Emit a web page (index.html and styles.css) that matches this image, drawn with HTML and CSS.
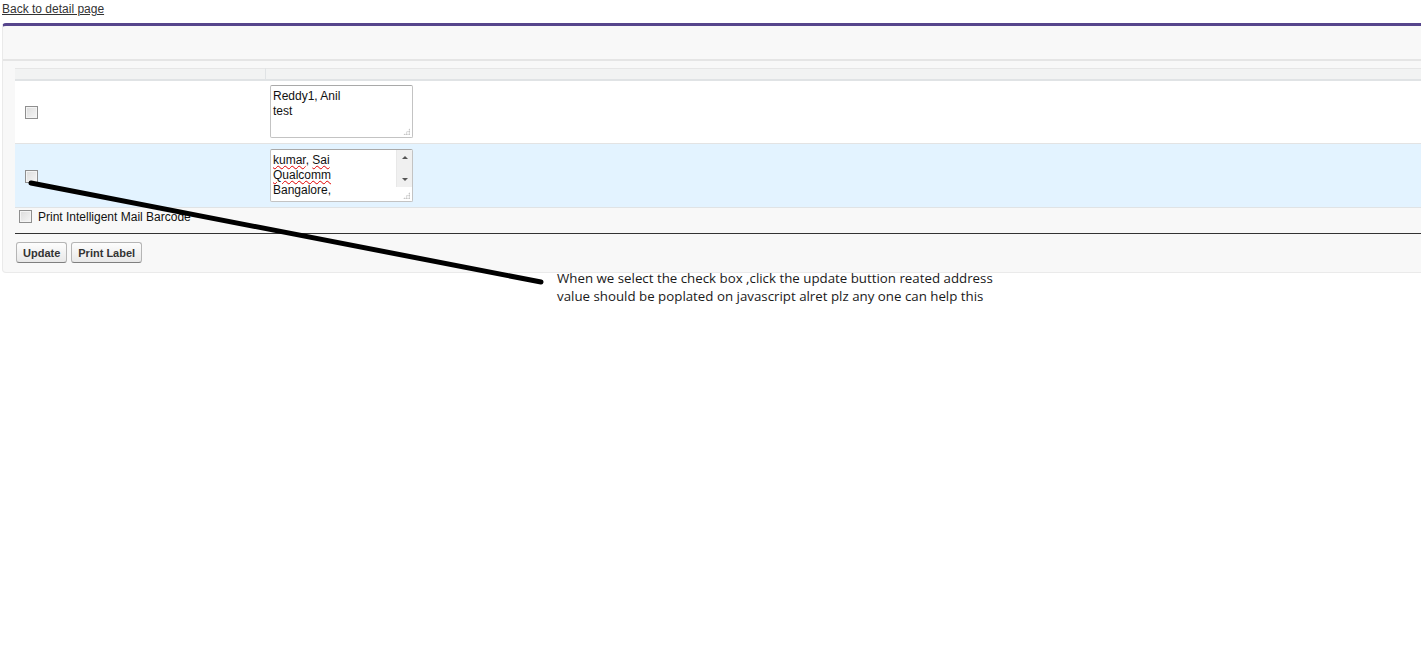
FILE: index.html
```html
<!DOCTYPE html>
<html lang="en">
<head>
    <meta charset="UTF-8">
    <title>Print Labels</title>
    <link rel="stylesheet" href="styles.css">
</head>
<body>
    <a class="back-link" href="#">Back to detail page</a>
    <div class="page-block">
        <div class="block-header"></div>
        <table class="list">
            <tr class="head-row">
                <th class="col-check"></th>
                <th></th>
            </tr>
            <tr class="data-row">
                <td class="col-check"><span class="checkbox"></span></td>
                <td>
                    <div class="address-box">
                        <div class="address-text">Reddy1, Anil<br>test</div>
                        <span class="grip"></span>
                    </div>
                </td>
            </tr>
            <tr class="data-row highlight">
                <td class="col-check"><span class="checkbox"></span></td>
                <td>
                    <div class="address-box">
                        <div class="address-text"><span class="misspelt">kumar</span>, <span class="misspelt">Sai</span><br><span class="misspelt">Qualcomm</span><br>Bangalore,</div>
                        <div class="scrollbar">
                            <span class="arrow up"></span>
                            <span class="arrow down"></span>
                        </div>
                        <span class="grip"></span>
                    </div>
                </td>
            </tr>
        </table>
        <label class="barcode-option"><span class="checkbox"></span>Print Intelligent Mail Barcode</label>
        <div class="block-footer">
            <button class="btn">Update</button>
            <button class="btn">Print Label</button>
        </div>
    </div>

    <svg class="pointer-line" width="1421" height="648" viewBox="0 0 1421 648">
        <path d="M31 183 L541 282" stroke="#000" stroke-width="5" stroke-linecap="round"/>
    </svg>
    <div class="note">When we select the check box ,click the update buttion reated address<br>value should be poplated on javascript alret plz any one can help this</div>
</body>
</html>
```

FILE: styles.css
```css
* {
    box-sizing: border-box;
}

body {
    margin: 0;
    font-family: Arial, 'Liberation Sans', sans-serif;
    font-size: 12px;
    color: #222;
    background: #fff;
    overflow: hidden;
    position: relative;
    min-height: 648px;
}

.back-link {
    display: inline-block;
    margin: 2px 0 0 2px;
    color: #333;
    font-size: 12px;
    line-height: 15px;
}

.page-block {
    margin: 6px -10px 0 2px;
    background: #f8f8f8;
    border: 1px solid #eaeaea;
    border-top: 3px solid #56458c;
    border-radius: 4px;
    padding-bottom: 9px;
}

.block-header {
    height: 35px;
    border-bottom: 2px solid #e5e5e5;
}

.list {
    margin: 7px 0 0 12px;
    width: calc(100% - 12px);
    border-collapse: collapse;
    border-top: 1px solid #e6e6e6;
}

.head-row th {
    height: 11px;
    padding: 0;
    background: #f2f3f3;
    border-bottom: 2px solid #e0e3e5;
    border-left: 1px solid #e0e3e5;
}

.head-row th:first-child {
    border-left: none;
}

.col-check {
    width: 250px;
}

.data-row td {
    height: 64px;
    padding: 4px 5px;
    background: #fff;
    border-bottom: 1px solid #e3e3e3;
    vertical-align: middle;
}

.data-row.highlight td {
    background: #e3f3ff;
    border-bottom: 1px solid #e0e3e5;
}

.data-row .col-check {
    padding-left: 10px;
}

.checkbox {
    display: inline-block;
    width: 13px;
    height: 13px;
    border: 1px solid #8f8f8f;
    background: linear-gradient(135deg, #dcdcdc 0%, #f6f6f6 100%);
    box-shadow: inset 0 0 0 1px #f4f4f4;
    vertical-align: middle;
}

.address-box {
    position: relative;
    width: 143px;
    height: 53px;
    background: #fff;
    border: 1px solid #c3c3c3;
    border-top-color: #a9a9a9;
    border-radius: 2px;
    overflow: hidden;
}

.address-text {
    padding: 3px 0 0 2px;
    font-size: 12px;
    line-height: 15px;
    color: #111;
}

.misspelt {
    text-decoration: underline wavy #e00000;
    text-decoration-thickness: 1px;
    text-underline-offset: 1px;
}

.scrollbar {
    position: absolute;
    top: 0;
    right: 0;
    width: 16px;
    height: 37px;
    background: #f0f0f0;
    border-left: 1px solid #e8e8e8;
    display: flex;
    flex-direction: column;
    justify-content: space-between;
    align-items: center;
    padding: 6px 0;
}

.arrow {
    width: 0;
    height: 0;
    border-left: 3px solid transparent;
    border-right: 3px solid transparent;
}

.arrow.up {
    border-bottom: 3px solid #555;
}

.arrow.down {
    border-top: 3px solid #555;
}

.grip {
    position: absolute;
    right: 2px;
    bottom: 2px;
    width: 7px;
    height: 7px;
    background: radial-gradient(circle, #b0b0b0 0.7px, transparent 1px) 0 0 / 2.5px 2.5px;
    clip-path: polygon(100% 0, 100% 100%, 0 100%);
}

.barcode-option {
    display: flex;
    align-items: center;
    gap: 6px;
    margin: 0 0 0 16px;
    height: 17px;
    font-size: 12px;
    color: #111;
}

.block-footer {
    margin: 8px 0 0 12px;
    border-top: 1px solid #333;
    padding: 8px 0 0 1px;
    display: flex;
    gap: 4px;
}

.btn {
    font-family: Arial, 'Liberation Sans', sans-serif;
    font-size: 11px;
    font-weight: bold;
    color: #333;
    height: 21px;
    padding: 0 6px;
    border: 1px solid #b5b5b5;
    border-bottom-color: #7f7f7f;
    border-radius: 3px;
    background: linear-gradient(#fdfdfd, #e8e8e8);
}

.pointer-line {
    position: absolute;
    top: 0;
    left: 0;
    pointer-events: none;
}

.note {
    position: absolute;
    left: 557px;
    top: 269px;
    font-family: 'Open Sans', sans-serif;
    font-size: 13.3px;
    line-height: 18px;
    color: #1a1a1a;
}
```
